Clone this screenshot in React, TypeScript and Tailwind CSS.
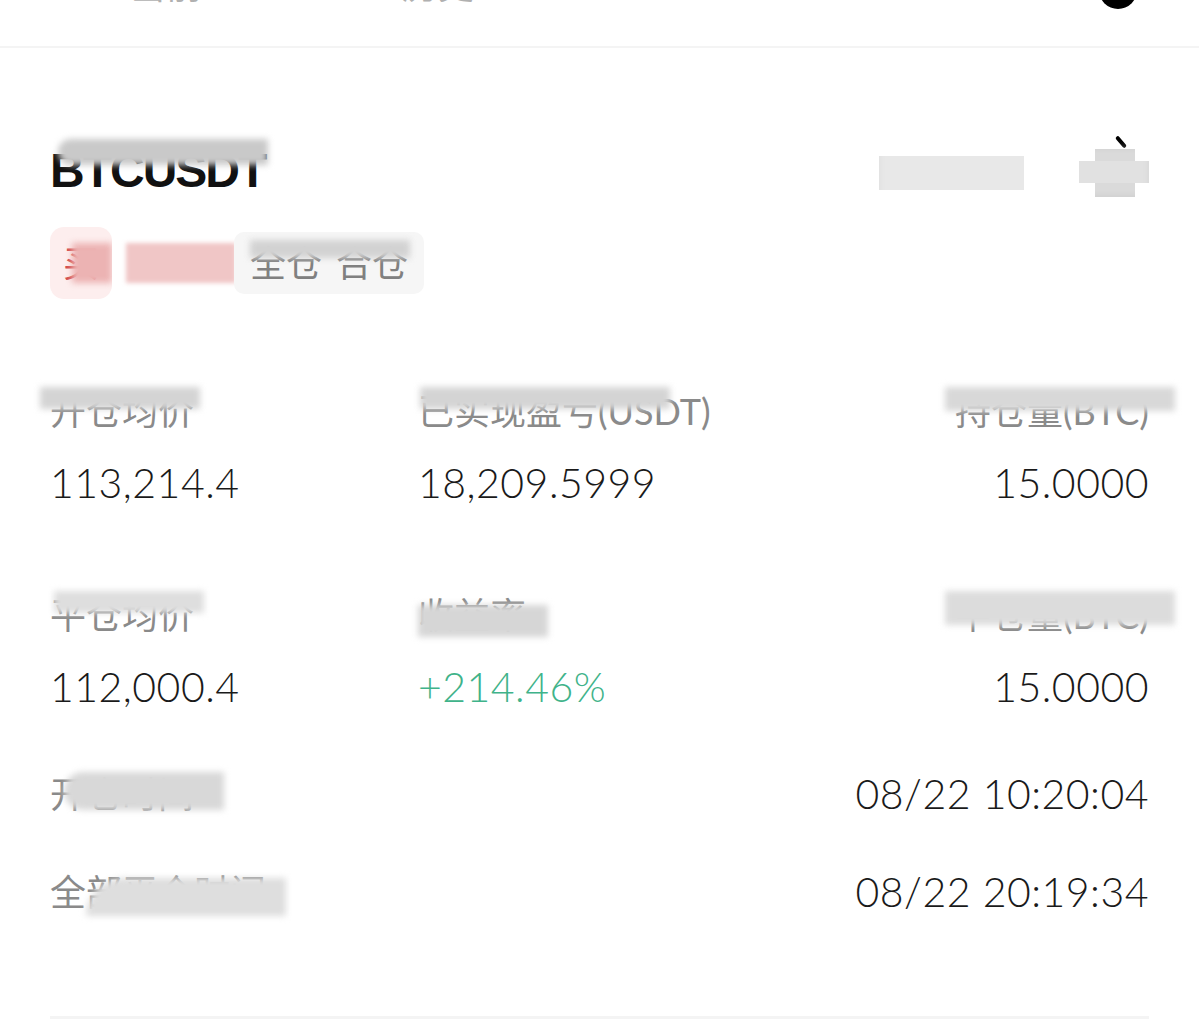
import React from 'react';

// blurred mosaic patch laid over text that is hidden in the screenshot
const Smudge: React.FC<{ className: string }> = ({ className }) => (
  <div className={`absolute pointer-events-none blur-[3px] ${className}`} />
);

const Label: React.FC<{ children: React.ReactNode; right?: boolean; smudge: string }> = ({ children, right, smudge }) => (
  <div className={`relative text-[36px] leading-none text-[#8a8a8a] ${right ? 'text-right' : ''}`}>
    {children}
    <Smudge className={smudge} />
  </div>
);

const Value: React.FC<{ children: React.ReactNode; right?: boolean; green?: boolean }> = ({ children, right, green }) => (
  <div
    className={`mt-[33px] text-[41px] leading-none font-light tracking-[0.5px] ${green ? 'text-[#3fb38a]' : 'text-[#1a1a1a]'} ${right ? 'text-right' : ''}`}
  >
    {children}
  </div>
);

export default function App() {
  return (
    <div className="min-h-[1027px] w-[1199px] bg-white font-['Lato','Noto_Sans_CJK_SC',sans-serif] overflow-hidden">
      {/* header, mostly cut off above the frame */}
      <header className="h-[48px] border-b-2 border-[#f4f4f4] relative overflow-hidden">
        <div className="flex items-start justify-between px-[50px] -mt-[33px]">
          <div className="flex gap-[200px] pl-[80px] text-[36px] leading-none text-[#b0b0b0]">
            <span>当前</span>
            <span>历史</span>
          </div>
          <div className="w-[38px] h-[38px] rounded-full bg-black mr-[12px] mt-[4px]" />
        </div>
      </header>

      <section className="px-[50px] pt-[99px]">
        {/* symbol row */}
        <div className="flex items-start justify-between">
          <div className="relative">
            <h1 className="text-[48px] leading-none font-bold text-[#111] font-['Liberation_Sans',sans-serif] tracking-[-2px]">
              BTCUSDT
            </h1>
            <Smudge className="left-[8px] top-[-8px] w-[210px] h-[26px] bg-[#c9c9c9] rounded-l-full" />
          </div>
          <div className="relative flex items-center gap-[55px] pt-[2px]">
            <div className="w-[145px] h-[34px] bg-[#dedede]" />
            <div className="relative w-[70px] h-[48px]">
              <div className="absolute left-[40px] -top-[14px] w-[4px] h-[14px] bg-black rotate-[-40deg] rounded" />
              <div className="absolute left-[16px] top-0 w-[40px] h-[48px] bg-[#cacaca]" />
              <div className="absolute left-0 top-[12px] w-[70px] h-[22px] bg-[#d4d4d4]" />
            </div>
            <Smudge className="inset-0 bg-white/30" />
          </div>
        </div>

        {/* tags */}
        <div className="mt-[30px] flex items-center gap-[14px] h-[72px]">
          <div className="relative h-[72px] w-[62px] rounded-[14px] bg-[#fdeeee] flex items-center justify-center text-[36px] text-[#d24a4a] overflow-hidden">
            买
            <Smudge className="left-[22px] top-[16px] w-[40px] h-[40px] bg-[#ecb3b3]" />
          </div>
          <div className="relative w-[110px] h-[40px] bg-[#f0c6c6] blur-[2px]" />
          <div className="relative -ml-[16px] h-[62px] px-[16px] rounded-[10px] bg-[#f6f6f6] flex items-center gap-[14px] text-[36px] text-[#808080]">
            <span>全仓</span>
            <span>合仓</span>
            <Smudge className="left-[16px] top-[8px] w-[160px] h-[18px] bg-[#d2d2d2]" />
          </div>
        </div>

        {/* stats grid */}
        <div className="mt-[94px] grid grid-cols-[368px_1fr_auto]">
          <div>
            <Label smudge="-left-[10px] -top-[6px] w-[160px] h-[22px] bg-[#d4d4d4]">开仓均价</Label>
            <Value>113,214.4</Value>
          </div>
          <div>
            <Label smudge="left-[2px] -top-[6px] w-[250px] h-[22px] bg-[#d4d4d4]">已实现盈亏(USDT)</Label>
            <Value>18,209.5999</Value>
          </div>
          <div>
            <Label right smudge="-left-[10px] -top-[6px] w-[230px] h-[24px] bg-[#d8d8d8]">持仓量(BTC)</Label>
            <Value right>15.0000</Value>
          </div>

          <div className="mt-[94px]">
            <Label smudge="left-[4px] -top-[6px] w-[150px] h-[22px] bg-[#dedede]">平仓均价</Label>
            <Value>112,000.4</Value>
          </div>
          <div className="mt-[94px]">
            <Label smudge="left-[0px] top-[8px] w-[130px] h-[32px] bg-[#d6d6d6]">收益率</Label>
            <Value green>+214.46%</Value>
          </div>
          <div className="mt-[94px]">
            <Label right smudge="-left-[10px] -top-[6px] w-[230px] h-[34px] bg-[#dcdcdc]">平仓量(BTC)</Label>
            <Value right>15.0000</Value>
          </div>
        </div>

        {/* times */}
        <div className="mt-[66px] flex items-center justify-between">
          <Label smudge="left-[14px] -top-[4px] w-[160px] h-[38px] bg-[#d8d8d8] rounded-l-full">开仓时间</Label>
          <div className="text-[41px] leading-none font-light text-[#1a1a1a] tracking-[0.5px]">08/22 10:20:04</div>
        </div>
        <div className="mt-[57px] flex items-center justify-between">
          <Label smudge="left-[36px] top-[4px] w-[200px] h-[38px] bg-[#dedede] rounded-tl-full">全部平仓时间</Label>
          <div className="text-[41px] leading-none font-light text-[#1a1a1a] tracking-[0.5px]">08/22 20:19:34</div>
        </div>

        <div className="mt-[104px] h-[3px] bg-[#f4f4f4]" />
      </section>
    </div>
  );
}
